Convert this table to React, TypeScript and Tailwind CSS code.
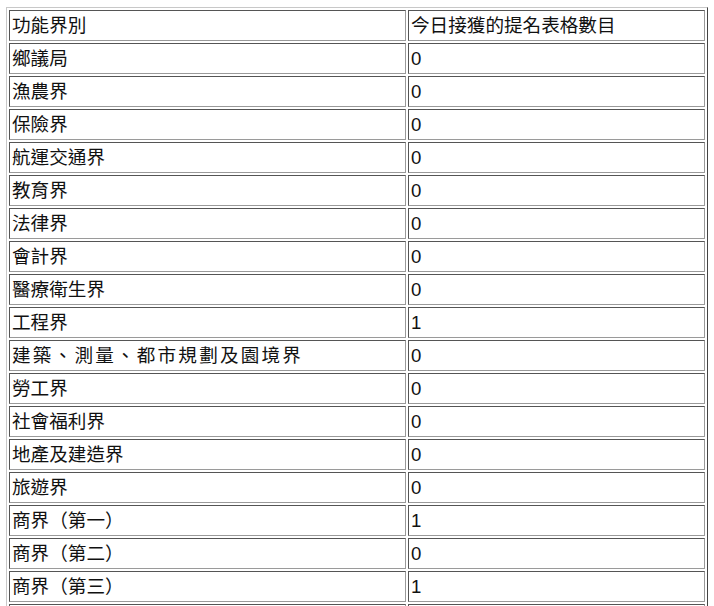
const rows: [string, string][] = [
  ["鄉議局", "0"],
  ["漁農界", "0"],
  ["保險界", "0"],
  ["航運交通界", "0"],
  ["教育界", "0"],
  ["法律界", "0"],
  ["會計界", "0"],
  ["醫療衛生界", "0"],
  ["工程界", "1"],
  ["建築、測量、都市規劃及園境界", "0"],
  ["勞工界", "0"],
  ["社會福利界", "0"],
  ["地產及建造界", "0"],
  ["旅遊界", "0"],
  ["商界（第一）", "1"],
  ["商界（第二）", "0"],
  ["商界（第三）", "1"],
  ["商界（第四）", "0"],
];

const cell =
  "border border-t-[#555] border-l-[#555] border-b-[#9a9a9a] border-r-[#9a9a9a] px-[2px] py-px text-left align-middle leading-[27px] whitespace-nowrap";

export default function App() {
  return (
    <div className="bg-white min-h-screen pt-[7px] pl-[6px] text-[18.6px] text-[#111] font-['Liberation_Sans','Noto_Sans_CJK_TC',sans-serif]">
      <table className="w-[702px] table-fixed border-separate border-spacing-[2px] border border-t-[#c8c8c8] border-l-[#c8c8c8] border-b-[#444] border-r-[#444]">
        <colgroup>
          <col className="w-[397px]" />
          <col />
        </colgroup>
        <tbody>
          <tr>
            <td className={cell}>功能界別</td>
            <td className={cell}>今日接獲的提名表格數目</td>
          </tr>
          {rows.map(([name, count]) => (
            <tr key={name}>
              {/* the long name renders wider in the source */}
              <td className={name.includes("、") ? cell + " tracking-[2.2px]" : cell}>{name}</td>
              <td className={cell}>{count}</td>
            </tr>
          ))}
        </tbody>
      </table>
    </div>
  );
}
